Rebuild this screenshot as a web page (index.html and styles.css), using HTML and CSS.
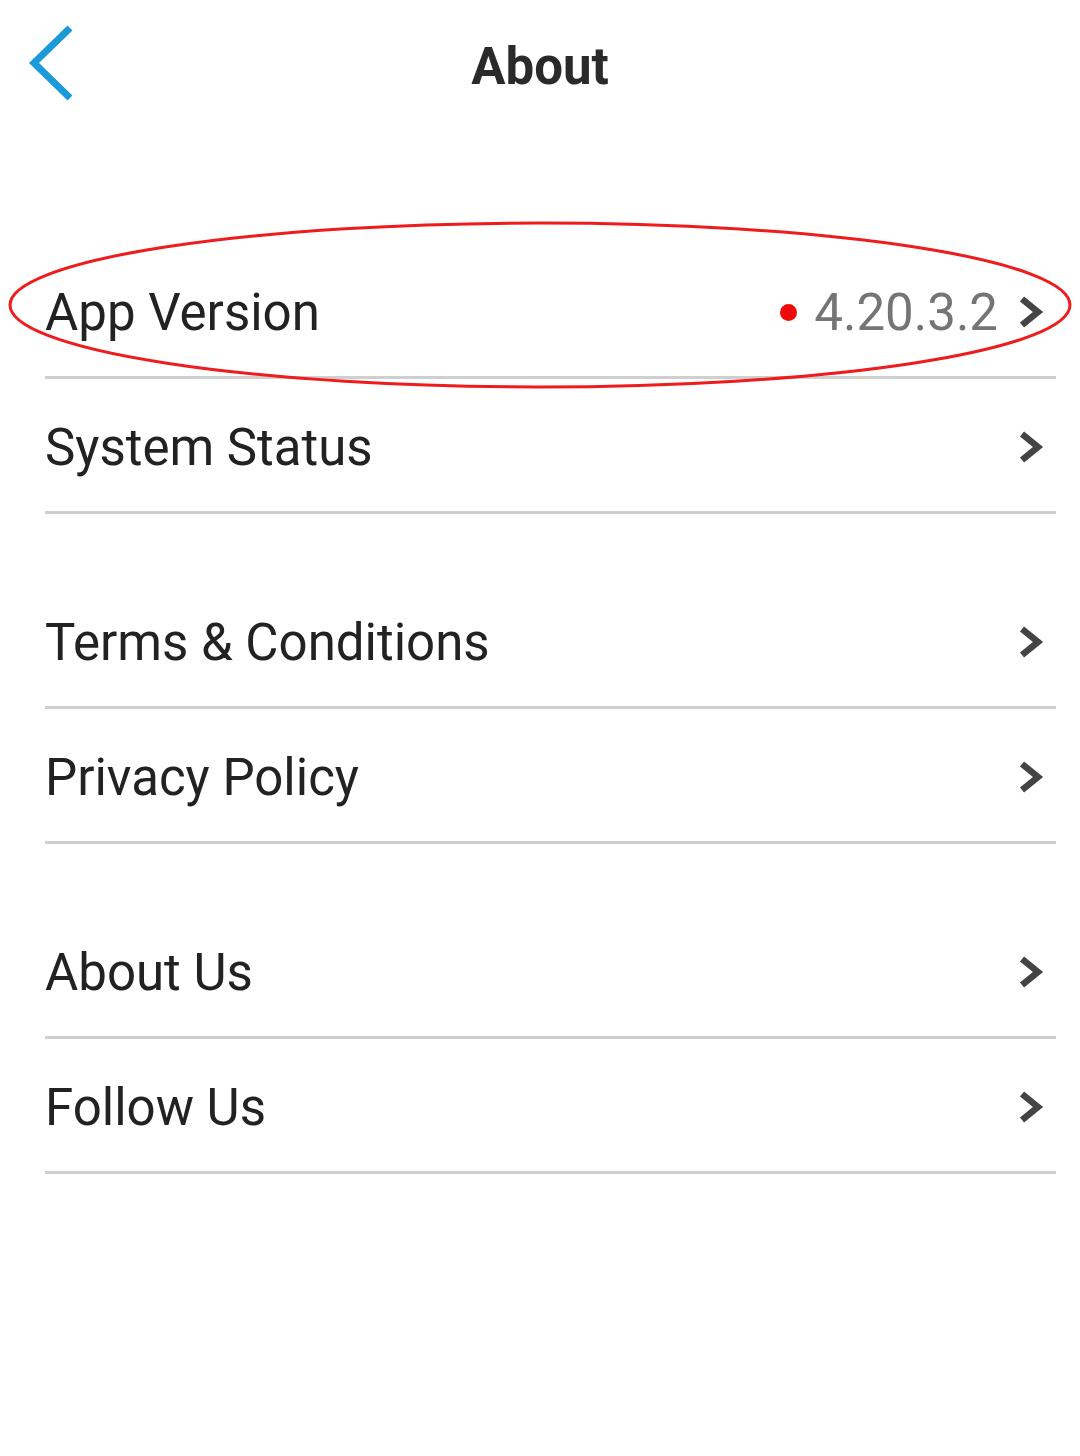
FILE: index.html
```html
<!DOCTYPE html>
<html lang="en">
<head>
    <meta charset="UTF-8">
    <meta name="viewport" content="width=device-width, initial-scale=1.0">
    <title>About</title>
    <link rel="stylesheet" href="styles.css">
</head>
<body>

<div class="header">
    <a class="back" href="#">
        <svg width="60" height="90" viewBox="0 0 60 90">
            <polyline points="48,6 12,41 48,76" fill="none" stroke="#1a9ad8" stroke-width="7"/>
        </svg>
    </a>
    <h1>About</h1>
</div>

<div class="list">
    <div class="group">
        <div class="row">
            <span class="label">App Version</span>
            <span class="value"><span class="dot"></span>4.20.3.2</span>
            <svg class="chev" width="26" height="32" viewBox="0 0 26 32"><polyline points="4,3 20,16 4,29" fill="none" stroke="#444" stroke-width="6.5"/></svg>
        </div>
        <div class="row">
            <span class="label">System Status</span>
            <svg class="chev" width="26" height="32" viewBox="0 0 26 32"><polyline points="4,3 20,16 4,29" fill="none" stroke="#444" stroke-width="6.5"/></svg>
        </div>
    </div>

    <div class="group">
        <div class="row">
            <span class="label">Terms &amp; Conditions</span>
            <svg class="chev" width="26" height="32" viewBox="0 0 26 32"><polyline points="4,3 20,16 4,29" fill="none" stroke="#444" stroke-width="6.5"/></svg>
        </div>
        <div class="row">
            <span class="label">Privacy Policy</span>
            <svg class="chev" width="26" height="32" viewBox="0 0 26 32"><polyline points="4,3 20,16 4,29" fill="none" stroke="#444" stroke-width="6.5"/></svg>
        </div>
    </div>

    <div class="group">
        <div class="row">
            <span class="label">About Us</span>
            <svg class="chev" width="26" height="32" viewBox="0 0 26 32"><polyline points="4,3 20,16 4,29" fill="none" stroke="#444" stroke-width="6.5"/></svg>
        </div>
        <div class="row">
            <span class="label">Follow Us</span>
            <svg class="chev" width="26" height="32" viewBox="0 0 26 32"><polyline points="4,3 20,16 4,29" fill="none" stroke="#444" stroke-width="6.5"/></svg>
        </div>
    </div>
</div>

<!-- red highlight drawn over the version row -->
<svg class="mark" width="1080" height="180" viewBox="0 0 1080 180">
    <ellipse cx="540" cy="84" rx="530" ry="82" fill="none" stroke="#ee1c1c" stroke-width="3"/>
</svg>

</body>
</html>
```

FILE: styles.css
```css
body {
    margin: 0;
    background: #fff;
    font-family: Roboto, "Noto Sans", sans-serif;
    color: #222;
    position: relative;
    width: 1080px;
    height: 1456px;
}

.header {
    position: relative;
    height: 134px;
    display: flex;
    align-items: center;
    justify-content: center;
}

.back {
    position: absolute;
    left: 22px;
    top: 22px;
    display: block;
}

.header h1 {
    margin: 0;
    font-size: 51px;
    font-weight: 700;
    color: #2a2a2a;
    line-height: 1;
    padding-bottom: 1px;
}

.list {
    padding: 0 24px 0 45px;
}

.group {
    margin-top: 60px;
}

.group:first-child {
    margin-top: 110px;
}

.row {
    display: flex;
    align-items: center;
    height: 128px;
    padding-top: 4px;
    border-bottom: 3px solid #cfcfcf;
}

.label {
    flex: 1;
    font-size: 51px;
    color: #222;
}

.value {
    display: flex;
    align-items: center;
    font-size: 51px;
    color: #757575;
    margin-right: 20px;
}

.dot {
    width: 17px;
    height: 17px;
    border-radius: 50%;
    background: #ee0a0a;
    margin-right: 17px;
}

.chev {
    margin-right: 12px;
}

.mark {
    position: absolute;
    left: 0;
    top: 221px;
}
```
